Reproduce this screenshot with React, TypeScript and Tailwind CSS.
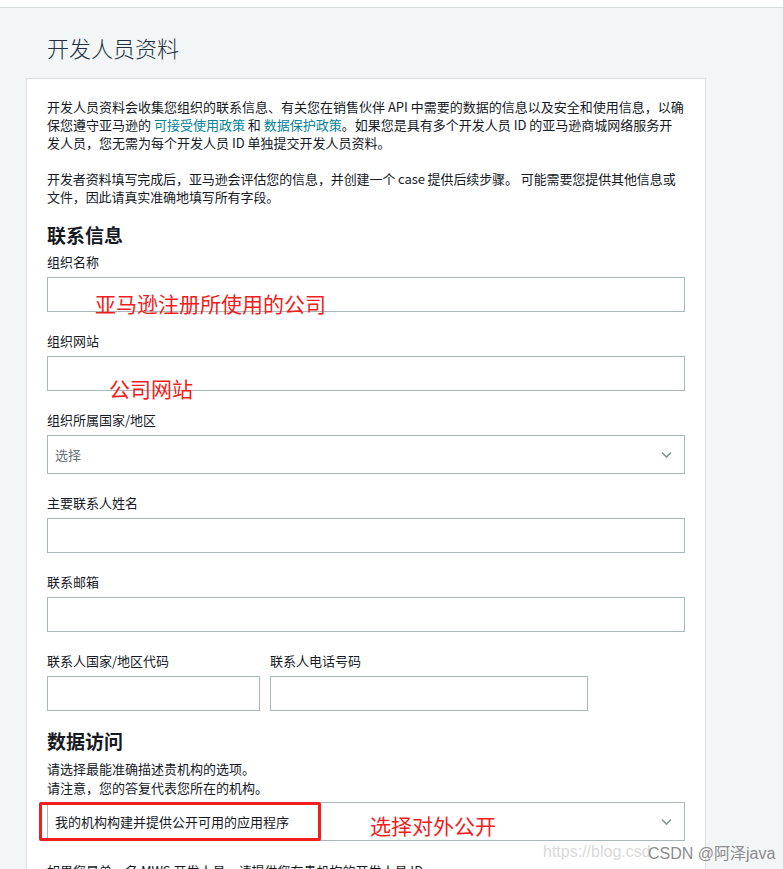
import React from "react";

const Chevron = () => (
  <svg width="11" height="7" viewBox="0 0 11 7" className="absolute right-[12px] top-1/2 -translate-y-1/2">
    <path d="M1 1 L5.5 5.5 L10 1" fill="none" stroke="#879596" strokeWidth="1.6" />
  </svg>
);

type FieldProps = {
  label: string;
  className?: string;
  width?: string;
  children?: React.ReactNode;
};

const Field = ({ label, className = "", width = "w-full", children }: FieldProps) => (
  <div className={className}>
    <div className="text-[13px] leading-[18px] text-[#16191f]">{label}</div>
    <div className={`relative mt-[6px] h-[35px] ${width} border border-[#aab7b8] bg-white`}>{children}</div>
  </div>
);

const Note = ({ text, className }: { text: string; className: string }) => (
  <span className={`absolute text-[21px] leading-[24px] text-[#f21d1d] whitespace-nowrap ${className}`}>{text}</span>
);

export default function App() {
  return (
    <div className="relative min-h-screen overflow-hidden bg-[#f3f6f7] font-['Noto_Sans_CJK_SC',sans-serif] text-[#16191f]">
      <div className="h-2 bg-white border-b border-[#d5dbdb]" />
      <div className="h-[70px] pl-[47px] pt-[24px]">
        <h1 className="text-[22px] leading-[30px] font-light text-[#232f3e]">开发人员资料</h1>
      </div>

      <div className="ml-[26px] w-[680px] bg-white border border-[#dcdfe0] border-b-0 px-[20px] pt-[19px] pb-10">
        <p className="text-[13px] leading-[18px]">
          开发人员资料会收集您组织的联系信息、有关您在销售伙伴 API 中需要的数据的信息以及安全和使用信息，以确保您遵守亚马逊的{" "}
          <a className="text-[#008296]">可接受使用政策</a> 和 <a className="text-[#008296]">数据保护政策</a>
          。如果您是具有多个开发人员 ID 的亚马逊商城网络服务开发人员，您无需为每个开发人员 ID 单独提交开发人员资料。
        </p>
        <p className="mt-[18px] text-[13px] leading-[18px] tracking-[-0.1px]">
          开发者资料填写完成后，亚马逊会评估您的信息，并创建一个 case 提供后续步骤。 可能需要您提供其他信息或文件，因此请真实准确地填写所有字段。
        </p>

        <h2 className="mt-[17px] text-[19px] leading-[24px] font-bold">联系信息</h2>

        <Field label="组织名称" className="mt-[6px]">
          <Note text="亚马逊注册所使用的公司" className="left-[47px] top-[13px]" />
        </Field>
        <Field label="组织网站" className="mt-[20px]">
          <Note text="公司网站" className="left-[61px] top-[19px]" />
        </Field>

        <div className="mt-[20px]">
          <div className="text-[13px] leading-[18px]">组织所属国家/地区</div>
          <div className="relative mt-[6px] h-[39px] border border-[#aab7b8] flex items-center pl-[7px] text-[13px] text-[#687078]">
            选择
            <Chevron />
          </div>
        </div>

        <Field label="主要联系人姓名" className="mt-[20px]" />
        <Field label="联系邮箱" className="mt-[20px]" />

        <div className="mt-[20px] flex gap-[10px]">
          <Field label="联系人国家/地区代码" width="w-[213px]" />
          <Field label="联系人电话号码" width="w-[318px]" />
        </div>

        <h2 className="mt-[18px] text-[19px] leading-[24px] font-bold">数据访问</h2>
        <p className="mt-[6px] text-[13px] leading-[19px]">
          请选择最能准确描述贵机构的选项。
          <br />
          请注意，您的答复代表您所在的机构。
        </p>
        <div className="relative mt-[5px] h-[39px] border border-[#aab7b8] flex items-center pl-[7px] text-[13px]">
          我的机构构建并提供公开可用的应用程序
          <Chevron />
          <div className="absolute left-[-9px] top-[-1px] w-[282px] h-[39px] border-[3px] border-[#f01e1e] rounded-[2px]" />
          <Note text="选择对外公开" className="left-[322px] top-[10px]" />
        </div>

        <p className="mt-[21px] text-[13px] leading-[18px]">
          如果您是单一名 MWS 开发人员，请提供您在贵机构的开发人员 ID。
        </p>
      </div>

      <div className="absolute left-[543px] top-[841px] whitespace-nowrap font-['Liberation_Sans',sans-serif] text-[16px] leading-[22px]">
        <span className="text-[#d9d9d9]">https://blog.csd</span>
        <span className="absolute left-[105px] top-0 text-[#8c8c8c] bg-transparent">
          CSDN @<span className="font-['Noto_Sans_CJK_SC',sans-serif]">阿泽</span>java
        </span>
      </div>
    </div>
  );
}
